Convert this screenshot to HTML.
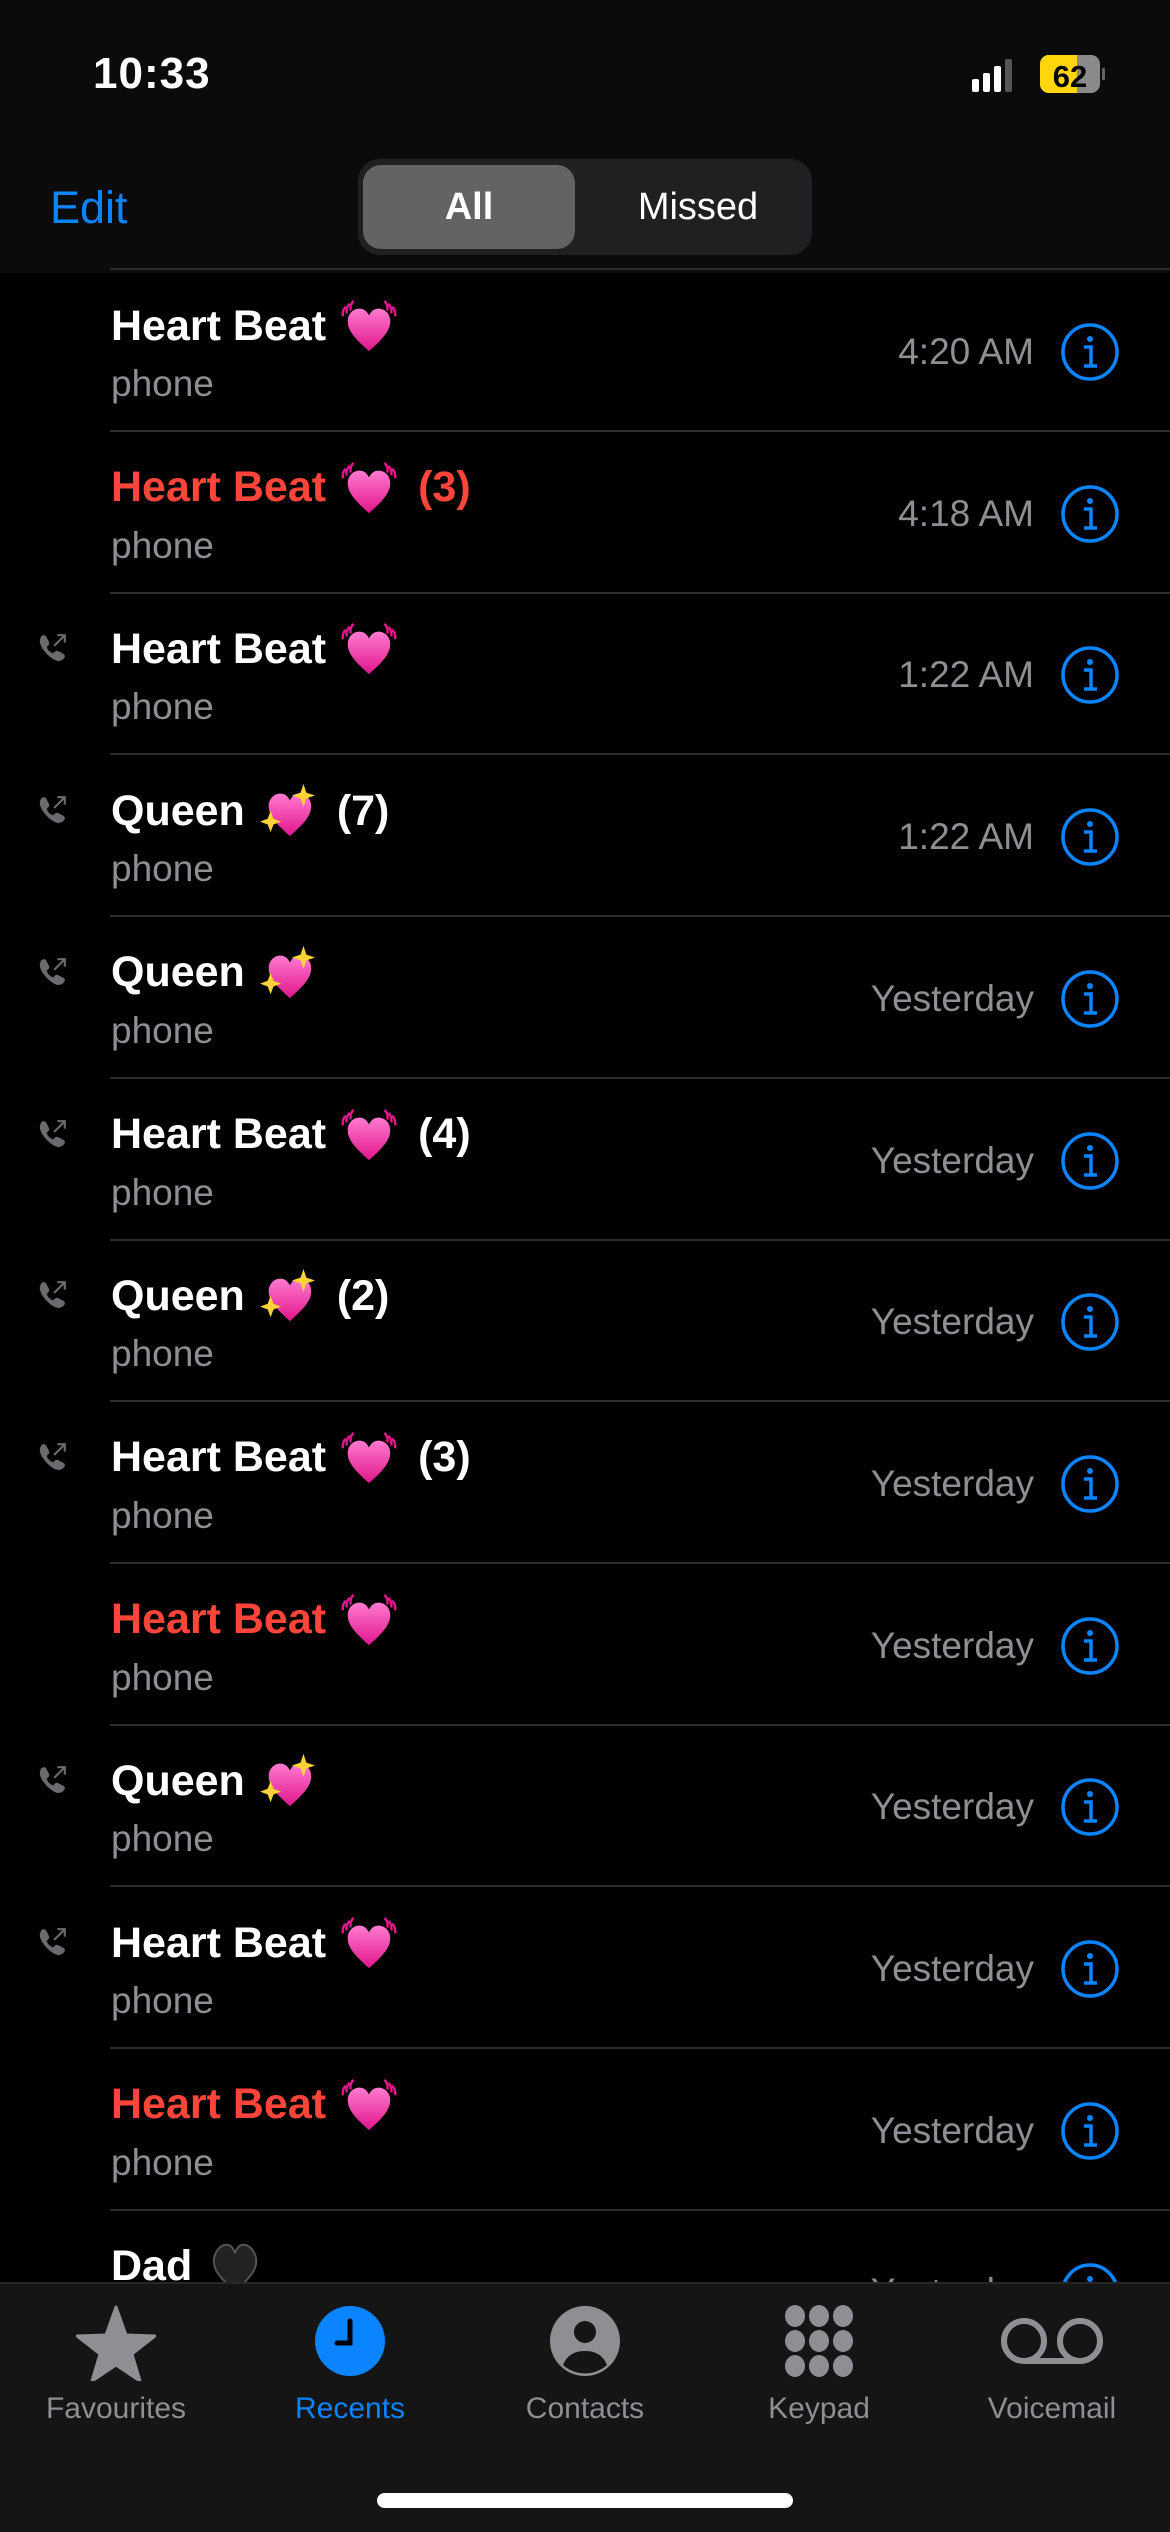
<!DOCTYPE html>
<html><head><meta charset="utf-8"><style>
*{margin:0;padding:0;box-sizing:border-box}
body{width:1170px;height:2532px;background:#000;font-family:"Liberation Sans",sans-serif;position:relative;overflow:hidden;color:#fff}
.hdr{position:absolute;left:0;top:0;width:1170px;height:273px;background:#0b0b0b}
.sep{position:absolute;left:110px;right:0;height:2px;background:#2c2c2e}
.row{position:absolute;left:0;width:1170px;height:162px}
.t{position:absolute;left:111px;top:28px;font-size:43px;font-weight:bold;white-space:nowrap;display:flex;align-items:center}
.t svg{margin-left:14px}
.t .c{margin-left:20px}
.p{position:absolute;left:111px;top:94px;font-size:37px;color:#8e8e93}
.tm{position:absolute;right:136px;top:62px;font-size:37px;color:#8e8e93}
.inf{position:absolute;left:1060px;top:53px}
.ic{position:absolute;left:36px;top:40px}
.red{color:#ff453a}
.tab{position:absolute;left:0;top:2282px;width:1170px;height:250px;background:#151515;border-top:2px solid #262626}
.ti{position:absolute;top:-9px;width:200px;margin-left:-100px;text-align:center}
.ti span{position:absolute;left:0;width:200px;top:117px;font-size:30px;color:#8e8e93}
</style></head><body>
<div class="hdr"></div>
<div style="position:absolute;left:93px;top:49px;font-size:44px;font-weight:bold;letter-spacing:1px">10:33</div>
<svg style="position:absolute;left:968px;top:55px" width="150" height="40">
<rect x="4" y="24" width="7" height="13" rx="2" fill="#fff"/><rect x="15" y="18" width="7" height="19" rx="2" fill="#fff"/><rect x="26" y="11" width="7" height="26" rx="2" fill="#fff"/><rect x="37" y="4" width="7" height="33" rx="2" fill="#555"/>
<rect x="72" y="0" width="60" height="38" rx="9" fill="#8a8a8a"/><path d="M81 0h28v38h-28a9 9 0 0 1-9-9v-20a9 9 0 0 1 9-9z" fill="#ffd60a"/>
<rect x="134" y="13" width="3" height="12" rx="1.5" fill="#666"/>
<text x="102" y="32" font-size="31" font-weight="bold" fill="#000" text-anchor="middle" font-family="Liberation Sans">62</text></svg>
<div style="position:absolute;left:50px;top:182px;font-size:45px;color:#0a84ff">Edit</div>
<div style="position:absolute;left:358px;top:159px;width:454px;height:96px;border-radius:22px;background:#202022"></div>
<div style="position:absolute;left:363px;top:165px;width:212px;height:84px;border-radius:18px;background:#636366"></div>
<div style="position:absolute;left:363px;top:186px;width:212px;text-align:center;font-size:38px;font-weight:bold">All</div>
<div style="position:absolute;left:600px;top:186px;width:196px;text-align:center;font-size:38px">Missed</div>
<div class="sep" style="top:268px"></div>

<svg width="0" height="0" style="position:absolute"><defs>
<linearGradient id="pg" x1="0" y1="0" x2="0" y2="1"><stop offset="0" stop-color="#ff7ad0"/><stop offset="1" stop-color="#e0168c"/></linearGradient>
<symbol id="hb" viewBox="0 0 60 60"><path d="M30 56 C14 42 8 34 8 25 C8 17 14 12 20 12 C25 12 28 15 30 19 C32 15 35 12 40 12 C46 12 52 17 52 25 C52 34 46 42 30 56Z" fill="url(#pg)"/><path d="M6 10q-4 4-3 10M10 7q-4 4-3 10M14 4q-4 4-3 10M54 10q4 4 3 10M50 7q4 4 3 10M46 4q4 4 3 10" stroke="#e0168c" stroke-width="2.5" fill="none"/></symbol>
<symbol id="sh" viewBox="0 0 60 60"><path d="M32 56 C16 42 10 34 10 25 C10 17 16 12 22 12 C27 12 30 15 32 19 C34 15 37 12 42 12 C48 12 54 17 54 25 C54 34 48 42 32 56Z" fill="url(#pg)"/><path d="M46 2l3 9 9 3-9 3-3 9-3-9-9-3 9-3z" fill="#ffd23a"/><path d="M12 30l3 8 8 3-8 3-3 8-3-8-8-3 8-3z" fill="#ffd23a"/></symbol>
<symbol id="bh" viewBox="0 0 60 60"><path d="M30 56 C14 42 8 34 8 25 C8 17 14 8 21 8 C26 8 28 12 30 16 C32 12 34 8 39 8 C46 8 52 17 52 25 C52 34 46 42 30 56Z" fill="#222" stroke="#555" stroke-width="2"/></symbol>
<symbol id="inf" viewBox="0 0 60 60"><circle cx="30" cy="30" r="27" fill="none" stroke="#0a84ff" stroke-width="3.5"/><circle cx="30" cy="17" r="3" fill="#0a84ff"/><path d="M24 25h7v19M24 44h13" stroke="#0a84ff" stroke-width="3.5" fill="none"/></symbol>
<symbol id="ph" viewBox="0 0 30 30"><path d="M5 4c2-2 4-1 5 1l2 4c1 2 0 3-1 4l-1 1c1 3 3 5 6 6l1-1c1-1 2-2 4-1l4 2c2 1 3 3 1 5-3 3-7 3-12-1-5-4-9-9-10-13-1-3 0-5 1-7z" fill="#6b6b6f"/><path d="M17 13l10-10M20 3h7v7" stroke="#6b6b6f" stroke-width="2" fill="none"/></symbol>
</defs></svg>

<div id="rows"></div>
<script>
var d=[["Heart Beat","hb","",0,0,"4:20 AM"],["Heart Beat","hb","(3)",1,0,"4:18 AM"],["Heart Beat","hb","",0,1,"1:22 AM"],["Queen","sh","(7)",0,1,"1:22 AM"],["Queen","sh","",0,1,"Yesterday"],["Heart Beat","hb","(4)",0,1,"Yesterday"],["Queen","sh","(2)",0,1,"Yesterday"],["Heart Beat","hb","(3)",0,1,"Yesterday"],["Heart Beat","hb","",1,0,"Yesterday"],["Queen","sh","",0,1,"Yesterday"],["Heart Beat","hb","",0,1,"Yesterday"],["Heart Beat","hb","",1,0,"Yesterday"],["Dad","bh","",0,0,"Yesterday"]];
var h="";
d.forEach(function(r,i){var top=269+i*161.7;
h+='<div class="row" style="top:'+top+'px">'+(r[4]?'<svg class="ic" width="32" height="32"><use href="#ph"/></svg>':'')+
'<div class="t'+(r[3]?' red':'')+'">'+r[0]+'<svg width="58" height="58"><use href="#'+r[1]+'"/></svg>'+(r[2]?'<span class="c">'+r[2]+'</span>':'')+'</div>'+
'<div class="p">phone</div><div class="tm">'+r[5]+'</div><svg class="inf" width="60" height="60"><use href="#inf"/></svg></div>';
if(i<12)h+='<div class="sep" style="top:'+(top+161)+'px"></div>';});
document.getElementById("rows").innerHTML=h;
</script>

<div class="tab">
<div class="ti" style="left:116px"><svg style="margin-top:30px" width="80" height="76" viewBox="0 0 80 76"><path d="M40 2l10 28 29 1-23 18 8 27-24-16-24 16 8-27L1 31l29-1z" fill="#8e8e93" stroke="#8e8e93" stroke-width="3" stroke-linejoin="round"/></svg><span>Favourites</span></div>
<div class="ti" style="left:350px"><svg style="margin-top:30px" width="72" height="72" viewBox="0 0 72 72"><circle cx="36" cy="36" r="35" fill="#0a84ff"/><path d="M36 16v22h-13" stroke="#000" stroke-width="5" fill="none" stroke-linecap="round"/></svg><span style="color:#0a84ff">Recents</span></div>
<div class="ti" style="left:585px"><svg style="margin-top:30px" width="72" height="72" viewBox="0 0 72 72"><circle cx="36" cy="36" r="35" fill="#8e8e93"/><circle cx="36" cy="27" r="11" fill="#151515"/><path d="M14 60c4-10 12-14 22-14s18 4 22 14a33 33 0 0 1-44 0z" fill="#151515"/></svg><span>Contacts</span></div>
<div class="ti" style="left:819px"><svg style="margin-top:30px" width="72" height="72" viewBox="0 0 72 72" fill="#8e8e93"><ellipse cx="12" cy="11" rx="10" ry="11"/><ellipse cx="36" cy="11" rx="10" ry="11"/><ellipse cx="60" cy="11" rx="10" ry="11"/><ellipse cx="12" cy="36" rx="10" ry="11"/><ellipse cx="36" cy="36" rx="10" ry="11"/><ellipse cx="60" cy="36" rx="10" ry="11"/><ellipse cx="12" cy="61" rx="10" ry="11"/><ellipse cx="36" cy="61" rx="10" ry="11"/><ellipse cx="60" cy="61" rx="10" ry="11"/></svg><span>Keypad</span></div>
<div class="ti" style="left:1052px"><svg style="margin-top:42px" width="104" height="48" viewBox="0 0 104 48"><circle cx="24" cy="24" r="20" fill="none" stroke="#8e8e93" stroke-width="6"/><circle cx="80" cy="24" r="20" fill="none" stroke="#8e8e93" stroke-width="6"/><path d="M24 44h56" stroke="#8e8e93" stroke-width="6"/></svg><span>Voicemail</span></div>
</div>
<div style="position:absolute;left:377px;top:2493px;width:416px;height:15px;border-radius:8px;background:#fff"></div>
</body></html>
